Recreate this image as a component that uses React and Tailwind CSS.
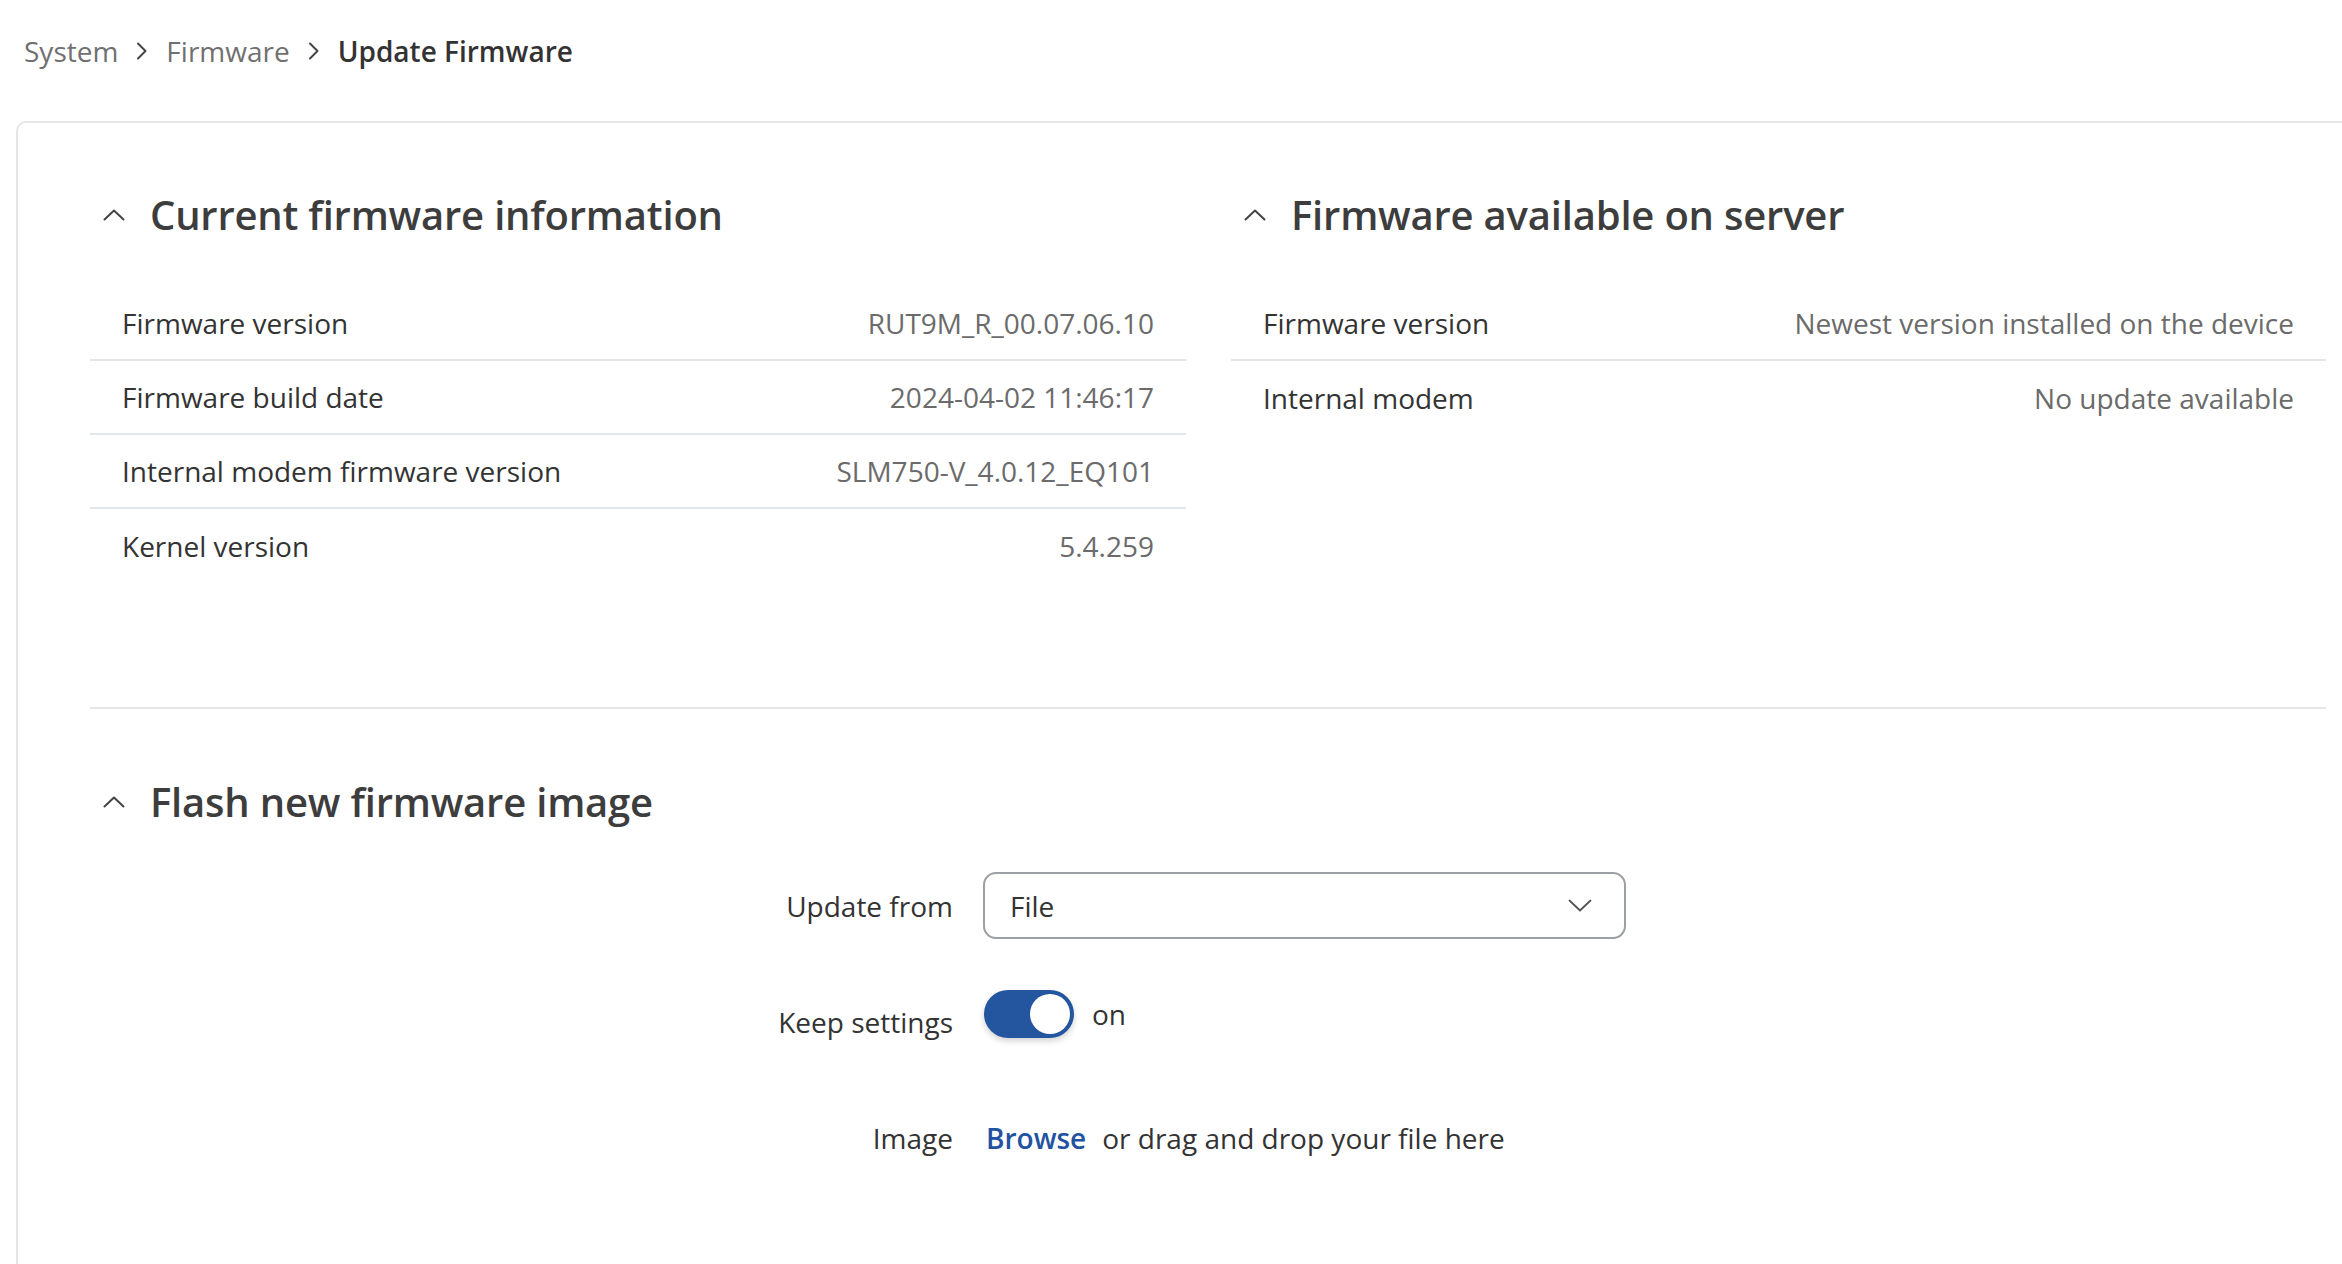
import React from "react";

const font = { fontFamily: '"Open Sans", "Noto Sans", sans-serif' };

function Crumb() {
  return (
    <svg width="12" height="18" viewBox="0 0 12 18" fill="none" className="shrink-0">
      <path d="M2 1.5 L9.5 9 L2 16.5" stroke="#444" strokeWidth="2" strokeLinecap="round" strokeLinejoin="round" />
    </svg>
  );
}

function ChevUp() {
  return (
    <svg width="22" height="12" viewBox="0 0 22 12" fill="none" className="shrink-0">
      <path d="M1.5 10.5 L11 1.5 L20.5 10.5" stroke="#444" strokeWidth="2" strokeLinecap="round" strokeLinejoin="round" />
    </svg>
  );
}

function ChevDown() {
  return (
    <svg width="24" height="13" viewBox="0 0 24 13" fill="none" className="shrink-0">
      <path d="M1.5 1.5 L12 11.5 L22.5 1.5" stroke="#555" strokeWidth="1.8" strokeLinecap="round" strokeLinejoin="round" />
    </svg>
  );
}

function SectionHeading({ children }) {
  return (
    <div className="flex items-center h-[48px] pl-[13px] gap-[25px]">
      <ChevUp />
      <h2 className="text-[40px] leading-[48px] font-semibold text-[#3d3d3d] tracking-[-0.2px]">{children}</h2>
    </div>
  );
}

function Row({ label, value, last }) {
  return (
    <div
      className={
        "flex items-center justify-between h-[74px] pl-[32px] pr-[32px] text-[28px] " +
        (last ? "" : "border-b-2 border-[#e2e5e9]")
      }
    >
      <span className="text-[#333333]">{label}</span>
      <span className="text-[#6b6b6b]">{value}</span>
    </div>
  );
}

export default function App() {
  return (
    <div className="w-[2342px] h-[1264px] overflow-hidden bg-white" style={font}>
      {/* Breadcrumb */}
      <div className="flex items-center h-[102px] pl-[24px] gap-[18px] text-[28px] mb-[19px]">
        <span className="text-[#707070]">System</span>
        <Crumb />
        <span className="text-[#707070]">Firmware</span>
        <Crumb />
        <span className="text-[#333333] font-semibold">Update Firmware</span>
      </div>

      {/* Card */}
      <div className="ml-[16px] w-[2400px] h-[1200px] border-2 border-[#e6e6e6] rounded-tl-[10px] pl-[72px] pr-[74px] pt-[68px]">
        <div className="w-[2236px] border-b-2 border-[#e6e6e6] pb-[124px] grid grid-cols-[1096px_1095px] gap-x-[45px]">
          <div>
            <SectionHeading>Current firmware information</SectionHeading>
            <div className="mt-[48px]">
              <Row label="Firmware version" value="RUT9M_R_00.07.06.10" />
              <Row label="Firmware build date" value="2024-04-02 11:46:17" />
              <Row label="Internal modem firmware version" value="SLM750-V_4.0.12_EQ101" />
              <Row label="Kernel version" value="5.4.259" last />
            </div>
          </div>
          <div>
            <SectionHeading>Firmware available on server</SectionHeading>
            <div className="mt-[48px]">
              <Row label="Firmware version" value="Newest version installed on the device" />
              <Row label="Internal modem" value="No update available" last />
            </div>
          </div>
        </div>

        <div className="mt-[69px]">
          <SectionHeading>Flash new firmware image</SectionHeading>

          <div className="mt-[46px] flex flex-col text-[28px]">
            <div className="flex items-center h-[67px]">
              <div className="w-[863px] text-right text-[#333333]">Update from</div>
              <div className="ml-[30px] w-[643px] h-[67px] border-2 border-[#9c9fa4] rounded-[13px] flex items-center justify-between pl-[25px] pr-[32px]">
                <span className="text-[#333333]">File</span>
                <ChevDown />
              </div>
            </div>

            <div className="flex items-start mt-[51px] h-[48px]">
              <div className="w-[863px] text-right text-[#333333] leading-[40px] mt-[12px]">Keep settings</div>
              <div className="ml-[31px] flex items-center gap-[18px] h-[48px]">
                <div className="w-[90px] h-[48px] rounded-full bg-[#2456a0] flex items-center justify-end pr-[4px] shadow-[0_3px_6px_rgba(0,0,0,0.18)]">
                  <div className="w-[40px] h-[40px] rounded-full bg-white" />
                </div>
                <span className="text-[#333333] leading-[40px] -mt-[1px]">on</span>
              </div>
            </div>

            <div className="flex items-center mt-[80px] h-[40px]">
              <div className="w-[863px] text-right text-[#333333]">Image</div>
              <div className="ml-[33px] flex items-center gap-[16px]">
                <span className="text-[#2352a1] font-semibold">Browse</span>
                <span className="text-[#333333]">or drag and drop your file here</span>
              </div>
            </div>
          </div>
        </div>
      </div>
    </div>
  );
}
